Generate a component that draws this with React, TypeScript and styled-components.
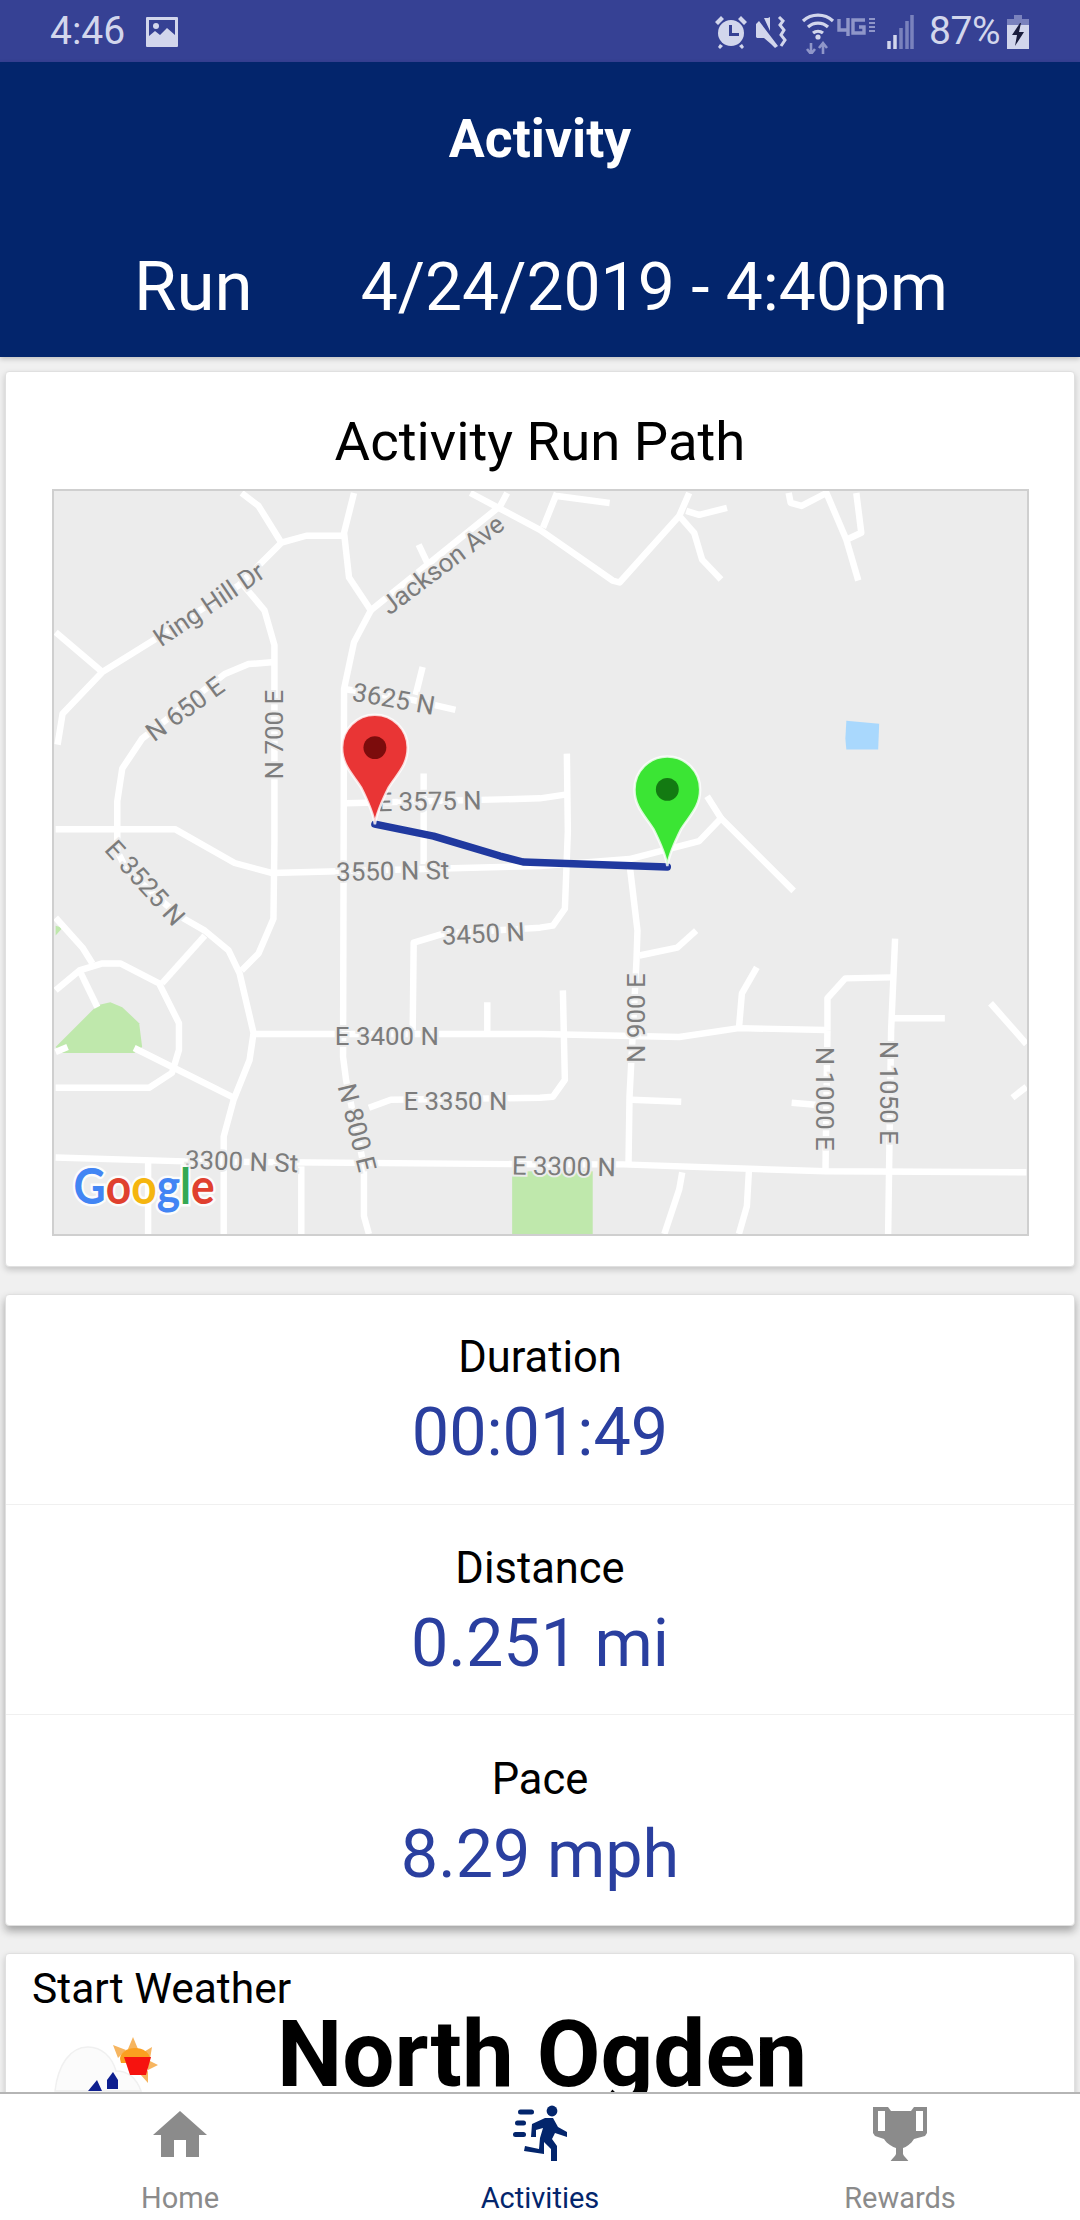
import React from "react";
import styled, { createGlobalStyle } from "styled-components";

const Global = createGlobalStyle`
  html, body { margin: 0; padding: 0; background: #f0f0f0; }
  #root { width: 1080px; height: 2220px; overflow: hidden; }
  * { box-sizing: border-box; }
`;

const Screen = styled.div`
  width: 1080px; height: 2220px; display: flex; flex-direction: column;
  font-family: Roboto, "Liberation Sans", sans-serif; background: #f0f0f0; overflow: hidden;
`;
const StatusBar = styled.div`
  height: 62px; flex: none; background: #364194; color: #d2d6ec; display: flex; align-items: center;
  padding: 1px 50px 0; font-size: 39px; line-height: 61px;
`;
const StatusLeft = styled.div`display: flex; align-items: center; gap: 21px; flex: 1;`;
const StatusRight = styled.div`display: flex; align-items: center; height: 61px;`;
const StatusIcon = styled.svg<{ $ml?: number }>`display: block; flex: none; margin-left: ${p => p.$ml ?? 0}px;`;
const Percent = styled.span`margin: 0 6px 0 14px; letter-spacing: -0.5px;`;

const Header = styled.header`
  height: 295px; flex: none; background: #03256c; color: #fff; display: flex; flex-direction: column;
  box-shadow: 0 2px 5px rgba(0,0,0,.2); position: relative; z-index: 1;
`;
const Title = styled.div`
  text-align: center; font-weight: 700; font-size: 53.5px; line-height: 60px; margin-top: 47px;
`;
const SubRow = styled.div`
  display: flex; align-items: baseline; font-size: 66px; line-height: 80px; margin-top: 78px; padding-left: 134px; gap: 108px; white-space: nowrap;
`;
const Kind = styled.span`font-size: 69px;`;

const Scroll = styled.main`
  flex: 1; min-height: 0; overflow: hidden; padding: 14px 5px 0; display: flex; flex-direction: column; gap: 27px;
`;
const Card = styled.section`
  flex: none; background: #fff; border: 1px solid #e0e0e0; border-radius: 4px; box-shadow: 0 3px 6px rgba(0,0,0,.18);
`;
const MapCard = styled(Card)`height: 896px; padding: 39px 46px 0;`;
const CardTitle = styled.h2`
  margin: 0 0 18px; font-weight: 400; font-size: 54.5px; line-height: 60px; text-align: center; color: #000; white-space: nowrap;
`;
const MapFrame = styled.svg`display: block; width: 977px; height: 747px; border: 2px solid #cfcfcf; background: #ececec;`;

const StatsCard = styled(Card)`height: 632px; box-shadow: 0 5px 9px rgba(0,0,0,.32);`;
const StatRow = styled.div`
  height: 210px; padding-top: 40px; text-align: center; border-bottom: 1px solid #f0f0f0;
  & + & { padding-top: 41px; }
  &:last-child { border-bottom: 0; padding-top: 42px; }
`;
const StatLabel = styled.div`font-size: 43.5px; line-height: 46px; color: #000;`;
const StatValue = styled.div`font-size: 66.5px; line-height: 102px; color: #2a3f9f;`;

const WeatherCard = styled(Card)`height: 300px; padding: 12px 26px; position: relative;`;
const WeatherLabel = styled.div`font-size: 42.5px; line-height: 46px; color: #000;`;
const WeatherBody = styled.div`display: flex;`;
const WeatherIcon = styled.svg`display: block; flex: none; margin: 17px 0 0 8px;`;
const City = styled.div`
  font-weight: 700; font-size: 92.5px; line-height: 100px; color: #000; margin: -7px 0 0 107px; white-space: nowrap;
`;

const TabBar = styled.nav`
  height: 128px; flex: none; background: #fff; border-top: 2px solid #b5b5b5; display: grid; grid-template-columns: repeat(3, 1fr);
  position: relative; z-index: 2;
`;
const Tab = styled.div<{ $active?: boolean }>`
  display: flex; flex-direction: column; align-items: center; color: ${p => (p.$active ? "#03256c" : "#8b8b8b")};
  font-size: 29px; line-height: 32px;
`;
const TabIcon = styled.svg`display: block; margin-top: 1px;`;
const TabText = styled.span`margin-top: 21px;`;

const Roads = styled.g`fill: none; stroke: #fff; stroke-width: 6.5; stroke-linejoin: round; stroke-linecap: butt;`;
const Label = styled.text`
  font-family: Roboto, sans-serif; font-size: 26px; fill: #7c7c7c; stroke: #ececec; stroke-width: 4px;
  paint-order: stroke; text-anchor: middle; dominant-baseline: central;
`;
const Logo = styled.text`
  font-family: Lato, sans-serif; font-size: 50px; font-weight: 700; stroke: #fff; stroke-opacity: .85; stroke-width: 5px; paint-order: stroke;
`;

const roads = [
  "55,743 60,712 100,670 153,637 237,583 280,540 305,533 342,533",
  "53,630 100,670", "240,490 257,503 280,540",
  "242,583 263,608 273,643 273,840 272,918 257,953 240,970",
  "273,660 247,662 223,672 140,737 120,767 115,800 115,850 125,870 177,915 203,930 227,950 238,973 252,1033 248,1060 232,1100 222,1137 222,1235",
  "353,490 343,530 348,575 370,608 353,640 343,687 342,1057 345,1080 363,1167 363,1217 368,1235",
  "370,608 500,503 507,490", "470,490 540,527 613,578 620,580 680,513 690,490",
  "418,542 428,563", "422,665 415,693", "343,687 407,697 455,708",
  "345,802 540,797 567,793", "567,752 568,830 565,908 553,925 540,927 443,933 413,942 412,1030",
  "423,772 423,863",
  "53,828 173,828 233,862 270,872 540,865 630,858 700,840 722,817 708,795",
  "722,817 795,890",
  "630,863 638,930 637,960 630,1097 629,1163", "640,955 678,947 697,930",
  "253,1034 540,1034 680,1037 740,1028 827,1030", "740,1028 743,993 758,967",
  "829,1030 829,998 847,978 893,977", "897,938 893,1030 890,1235", "895,1018 947,1018",
  "829,1030 827,1172", "793,1103 817,1105", "993,1003 1029,1044", "1015,1098 1029,1087", "632,1100 682,1102",
  "53,1158 183,1162 540,1165 623,1165 827,1172 1029,1173",
  "683,1173 680,1190 665,1235", "750,1172 748,1207 740,1235",
  "146,1163 146,1235", "300,1167 300,1235",
  "203,935 160,983",
  "53,990 77,970 100,963 118,963 157,983 177,1023 177,1050 170,1073 147,1088 53,1088",
  "53,917 80,947 90,963", "77,970 95,1007", "132,1048 232,1098", "53,1052 65,1047",
  "368,1108 390,1100 540,1098 553,1097 565,1080 563,990", "487,1002 487,1032",
  "557,490 543,525", "557,493 610,500",
  "680,513 695,530 703,557 722,577", "687,508 700,512 728,505",
  "790,490 792,500 803,503 828,490 848,537 860,578", "848,537 863,530 858,490",
];

const labels: [string, number, number, number][] = [
  ["King Hill Dr", 207, 602, -34], ["Jackson Ave", 442, 562, -37], ["N 650 E", 183, 707, -36],
  ["N 700 E", 273, 733, -90], ["3625 N", 393, 697, 10], ["E 3575 N", 429, 800, -1],
  ["3550 N St", 392, 870, -1], ["E 3525 N", 143, 882, 48], ["3450 N", 483, 933, -3],
  ["E 3400 N", 386, 1036, 0], ["E 3350 N", 455, 1101, 0], ["N 800 E", 356, 1128, 76],
  ["3300 N St", 240, 1162, 2], ["E 3300 N", 564, 1167, 1], ["N 900 E", 637, 1018, -90],
  ["N 1000 E", 827, 1099, 90], ["N 1050 E", 891, 1093, 90],
];

const Pin = ({ x, y, fill, dot }: { x: number; y: number; fill: string; dot: string }) => (
  <g transform={`translate(${x} ${y})`}>
    <path d="M0 77C-2 64-8 52-14 40-22 27-33 18-33 0a33 33 0 0 1 66 0C33 18 22 27 14 40 8 52 2 64 0 77Z" fill={fill} stroke="#fff" strokeOpacity=".8" strokeWidth="2.5" />
    <circle r="11.5" fill={dot} />
  </g>
);

const MapView = () => (
  <MapFrame viewBox="52 488 977 747">
    <polygon points="53,1047 95,1005 108,1002 120,1007 137,1023 140,1047 132,1053 60,1053" fill="#bfe8ac" />
    <polygon points="53,925 53,935 60,927" fill="#bfe8ac" />
    <rect x="512" y="1172" width="81" height="63" fill="#bfe8ac" />
    <polygon points="848,719 881,722 880,748 848,748 847,737" fill="#a9d8fd" />
    <Roads>{roads.map((r, i) => <polyline key={i} points={r} />)}</Roads>
    {labels.map(([t, x, y, a]) => (
      <Label key={t} transform={`translate(${x} ${y}) rotate(${a})`}>{t}</Label>
    ))}
    <polyline points="374,823 433,835 500,855 523,861 668,866" fill="none" stroke="#20399f" strokeWidth="7.5" strokeLinecap="round" strokeLinejoin="round" />
    <Pin x={374} y={746} fill="#e93535" dot="#7c0c0c" />
    <Pin x={668} y={788} fill="#3be534" dot="#137a12" />
    <Logo x="71" y="1205" textLength="142" lengthAdjust="spacingAndGlyphs">
      <tspan fill="#4285f4">G</tspan><tspan fill="#e0402f">o</tspan><tspan fill="#f5b50f">o</tspan>
      <tspan fill="#4285f4">g</tspan><tspan fill="#34a853">l</tspan><tspan fill="#e0402f">e</tspan>
    </Logo>
  </MapFrame>
);

export default function App() {
  return (
    <Screen>
      <Global />
      <StatusBar>
        <StatusLeft>
          <span>4:46</span>
          <StatusIcon width="32" height="30" viewBox="0 0 32 30">
            <path fill="#d2d6ec" fillRule="evenodd" d="M1 0h30a1 1 0 0 1 1 1v28a1 1 0 0 1-1 1H1a1 1 0 0 1-1-1V1a1 1 0 0 1 1-1ZM3 3v16l6-5 5 4 7-7 8 7V3Z" />
            <circle cx="10" cy="9" r="3" fill="#d2d6ec" />
          </StatusIcon>
        </StatusLeft>
        <StatusRight>
          <StatusIcon width="36" height="36" viewBox="0 0 36 36">
            <circle cx="18" cy="19" r="13" fill="#d2d6ec" />
            <path d="M16 11h3v8h7v3H16z" fill="#364194" />
            <path d="M2 8l6-6 3 3-6 6zM34 8l-6-6-3 3 6 6zM7 30l3 2-3 3-2-2zM29 30l-3 2 3 3 2-2z" fill="#d2d6ec" />
          </StatusIcon>
          <StatusIcon $ml={6} width="32" height="34" viewBox="0 0 32 34">
            <path d="M1 9l3-3 19 25-3 2-4-4-7-6H2l-1-1zM9 3h4l2-1v14z" fill="#d2d6ec" />
            <path d="M24 2l4 4-3 4 4 5-3 5 4 5-4 6" fill="none" stroke="#d2d6ec" strokeWidth="3" />
          </StatusIcon>
          <StatusIcon $ml={14} width="34" height="44" viewBox="0 0 34 44">
            <path d="M2 11a22 22 0 0 1 30 0M7 17a15 15 0 0 1 20 0M12 23a8 8 0 0 1 10 0" fill="none" stroke="#d2d6ec" strokeWidth="3.2" />
            <circle cx="17" cy="27" r="2.6" fill="#d2d6ec" />
            <path d="M10 33v11M6 39l4 5 4-5M22 44V33M18 38l4-5 4 5" fill="none" stroke="#8f96c9" strokeWidth="2.6" />
          </StatusIcon>
          <StatusIcon $ml={1} width="44" height="34" viewBox="0 0 40 34">
            <path d="M1 4v11h9M10 3v18" fill="none" stroke="#8f96c9" strokeWidth="3.4" />
            <path d="M27 5H15v13h11v-6h-5" fill="none" stroke="#8f96c9" strokeWidth="3.4" />
            <path d="M31 4h6M31 8h6M31 12h6M31 16h6" stroke="#8f96c9" strokeWidth="2" />
          </StatusIcon>
          <StatusIcon $ml={5} width="30" height="38" viewBox="0 0 30 38">
            <path d="M4 28v8" stroke="#d2d6ec" strokeWidth="3.5" />
            <path d="M10 22v14" stroke="#d2d6ec" strokeWidth="3.5" />
            <path d="M16 15v21M22 8v28M27 2v34" stroke="#7a82bd" strokeWidth="3.5" />
          </StatusIcon>
          <Percent>87%</Percent>
          <StatusIcon width="24" height="34" viewBox="0 0 22 34">
            <path d="M7 0h8v4H7z" fill="#7a82bd" />
            <path d="M0 4h22v6H0z" fill="#7a82bd" />
            <path d="M0 10h22v24H0z" fill="#d2d6ec" />
            <path d="M13 8L5 20h5l-2 11 9-14h-5l2-9z" fill="#1a1d3c" />
          </StatusIcon>
        </StatusRight>
      </StatusBar>
      <Header>
        <Title>Activity</Title>
        <SubRow><Kind>Run</Kind><span>4/24/2019 - 4:40pm</span></SubRow>
      </Header>
      <Scroll>
        <MapCard>
          <CardTitle>Activity Run Path</CardTitle>
          <MapView />
        </MapCard>
        <StatsCard>
          <StatRow><StatLabel>Duration</StatLabel><StatValue>00:01:49</StatValue></StatRow>
          <StatRow><StatLabel>Distance</StatLabel><StatValue>0.251 mi</StatValue></StatRow>
          <StatRow><StatLabel>Pace</StatLabel><StatValue>8.29 mph</StatValue></StatRow>
        </StatsCard>
        <WeatherCard>
          <WeatherLabel>Start Weather</WeatherLabel>
          <WeatherBody>
            <WeatherIcon width="130" height="65" viewBox="0 0 130 65">
              <path d="M15 62C18 36 30 18 48 18c14 0 24 10 28 24 12 0 20 6 25 20Z" fill="#fbfbfb" stroke="#f0f0f0" strokeWidth="1.5" />
              <path d="M93 8l5 12H88ZM73 16l13 5-8 8ZM112 18l-2 12-8-6ZM118 36l-10 5 0-10ZM108 54l-8-9 8-3Z" fill="#f6b560" />
              <path d="M80 30a15 11 0 0 1 30 0l-1 4H81Z" fill="#fb9f20" />
              <path d="M84 28h27l-5 18H90Z" fill="#f6130f" />
              <path d="M48 62l9-11 5 11ZM67 60v-9l6-8 5 8v9Z" fill="#0e1f8f" />
            </WeatherIcon>
            <City>North Ogden</City>
          </WeatherBody>
        </WeatherCard>
      </Scroll>
      <TabBar>
        <Tab>
          <TabIcon width="100" height="66" viewBox="0 0 100 66">
            <path fill="currentColor" fillRule="evenodd" d="M50 16l27 24h-8v22H56V45H44v17H31V40h-8z" />
          </TabIcon>
          <TabText>Home</TabText>
        </Tab>
        <Tab $active>
          <TabIcon width="100" height="66" viewBox="0 1 100 66">
            <circle cx="62" cy="17" r="5.4" fill="currentColor" />
            <rect x="28" y="15.5" width="16" height="5" rx="2.5" fill="currentColor" />
            <rect x="25" y="26.5" width="11" height="5" rx="2.5" fill="currentColor" />
            <rect x="23" y="38" width="13" height="5" rx="2.5" fill="currentColor" />
            <path fill="currentColor" d="M42 30l13-6h8l5 9 9 5v5l-12-4-3 6 5 7v18h-6V55l-7-7v12l-20-3 1-5 14 3 1-11 3-10-7 2v7h-5z" />
          </TabIcon>
          <TabText>Activities</TabText>
        </Tab>
        <Tab>
          <TabIcon width="100" height="66" viewBox="0 1 100 66">
            <path fill="currentColor" fillRule="evenodd" d="M23 13h15l3 4h20l3-4h13v26l-2 3-11 3c-3 5-8 8-11 9v6c1 3 5 5 7 10H39c2-5 6-7 7-10v-6c-3-1-9-4-12-9l-9-3-2-3ZM28 17v20h7V17ZM66 17v20h7V17Z" />
          </TabIcon>
          <TabText>Rewards</TabText>
        </Tab>
      </TabBar>
    </Screen>
  );
}
